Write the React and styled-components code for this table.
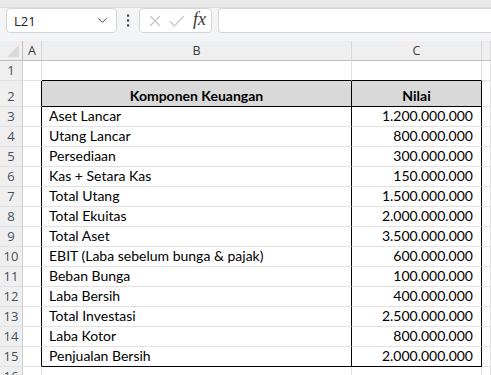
import React from "react"
import styled, { createGlobalStyle } from "styled-components"
import { ChevronDown } from "lucide-react"

const GlobalStyle = createGlobalStyle`
  html, body {
    margin: 0;
    padding: 0;
    background: #ffffff;
    overflow: hidden;
  }
  * {
    box-sizing: border-box;
  }
`

const Page = styled.div`
  width: 491px;
  height: 375px;
  overflow: hidden;
  background: #ffffff;
  font-family: "Open Sans", "Noto Sans", sans-serif;
`

const TopStrip = styled.div`
  height: 8px;
  background: #e9e9e9;
  border-bottom: 1px solid #dcdcdc;
`

const FormulaBar = styled.div`
  height: 33px;
  background: #f2f4f6;
  display: flex;
  align-items: flex-start;
  padding: 0 0 0 6px;
`

const Box = styled.div`
  height: 25px;
  background: #ffffff;
  border: 1px solid #d6d6d6;
  border-radius: 4px;
  display: flex;
  align-items: center;
`

const NameBox = styled(Box)`
  width: 111px;
  padding: 0 6px 0 7px;
  justify-content: space-between;
  font-size: 13px;
  color: #222;
`

const Dots = styled.div`
  width: 22px;
  height: 25px;
  display: flex;
  align-items: center;
  justify-content: center;
`

const FxBox = styled(Box)`
  width: 73px;
  padding: 0 5px 0 9px;
  justify-content: space-between;
`

const Fx = styled.span`
  font-family: "Liberation Serif", "DejaVu Serif", serif;
  font-style: italic;
  font-size: 18px;
  color: #3a3a3a;
  margin-top: -2px;
`

const FormulaInput = styled(Box)`
  flex: 1;
  margin-left: 6px;
  border-right: none;
  border-radius: 4px 0 0 4px;
`

const Sheet = styled.div`
  display: grid;
  grid-template-columns: 23px 19px 310px 130px 1fr;
  grid-template-rows: 20px 20px 26px repeat(13, 20px) 20px;
`

const Cell = styled.div`
  border-right: 1px solid ${p => p.$right || "#e1e1e1"};
  border-bottom: 1px solid ${p => p.$bottom || "#e1e1e1"};
  background: ${p => p.$bg || "#ffffff"};
  display: flex;
  align-items: flex-end;
  justify-content: ${p => (p.$align === "right" ? "flex-end" : p.$align === "center" ? "center" : "flex-start")};
  padding: ${p => (p.$align === "right" ? "0 8px 1px 0" : p.$align === "center" ? "0 0 1px 0" : "0 0 1px 7px")};
  font-family: "Lato", "Liberation Sans", sans-serif;
  font-size: 14px;
  font-weight: ${p => (p.$bold ? 700 : 400)};
  color: #000000;
  white-space: nowrap;
  overflow: hidden;
  line-height: 18px;
`

const ColHead = styled.div`
  background: #efefef;
  border-right: 1px solid #d9d9d9;
  border-bottom: 1px solid #bdbdbd;
  display: flex;
  align-items: center;
  justify-content: center;
  font-size: 12.5px;
  color: #3b3b3b;
`

const RowHead = styled.div`
  background: #efefef;
  border-right: 1px solid #d0d0d0;
  border-bottom: 1px solid #e1e1e1;
  display: flex;
  align-items: flex-end;
  justify-content: center;
  padding-bottom: 1px;
  font-size: 13px;
  color: #454f5b;
  line-height: 17px;
`

const Corner = styled(ColHead)`
  border-right: 1px solid #bdbdbd;
  align-items: flex-end;
  justify-content: flex-end;
  padding: 0 3px 3px 0;
`

const rows = [
  ["Aset Lancar", "1.200.000.000"],
  ["Utang Lancar", "800.000.000"],
  ["Persediaan", "300.000.000"],
  ["Kas + Setara Kas", "150.000.000"],
  ["Total Utang", "1.500.000.000"],
  ["Total Ekuitas", "2.000.000.000"],
  ["Total Aset", "3.500.000.000"],
  ["EBIT (Laba sebelum bunga & pajak)", "600.000.000"],
  ["Beban Bunga", "100.000.000"],
  ["Laba Bersih", "400.000.000"],
  ["Total Investasi", "2.500.000.000"],
  ["Laba Kotor", "800.000.000"],
  ["Penjualan Bersih", "2.000.000.000"],
]

const BLACK = "#000000"

export default function App() {
  return (
    <Page>
      <GlobalStyle />
      <TopStrip />
      <FormulaBar>
        <NameBox>
          <span>L21</span>
          <ChevronDown size={15} color="#444" strokeWidth={1.6} />
        </NameBox>
        <Dots>
          <svg width="4" height="13" viewBox="0 0 4 13">
            <rect x="1" y="0.5" width="2.2" height="2.2" fill="#444" />
            <rect x="1" y="5.4" width="2.2" height="2.2" fill="#444" />
            <rect x="1" y="10.3" width="2.2" height="2.2" fill="#444" />
          </svg>
        </Dots>
        <FxBox>
          <svg width="12" height="12" viewBox="0 0 12 12">
            <path d="M1 1 L11 11 M11 1 L1 11" stroke="#c4c4c4" strokeWidth="1.2" fill="none" />
          </svg>
          <svg width="16" height="12" viewBox="0 0 16 12">
            <path d="M1 6.5 L5.5 11 L15 1" stroke="#c4c4c4" strokeWidth="1.2" fill="none" />
          </svg>
          <Fx>fx</Fx>
        </FxBox>
        <FormulaInput />
      </FormulaBar>
      <Sheet>
        <Corner>
          <svg width="12" height="12" viewBox="0 0 12 12">
            <path d="M12 0 L12 12 L0 12 Z" fill="#d9d9d9" />
          </svg>
        </Corner>
        <ColHead>A</ColHead>
        <ColHead>B</ColHead>
        <ColHead>C</ColHead>
        <ColHead />

        <RowHead>1</RowHead>
        <Cell />
        <Cell $bottom={BLACK} />
        <Cell $bottom={BLACK} />
        <Cell />

        <RowHead>2</RowHead>
        <Cell $right={BLACK} />
        <Cell $right={BLACK} $bottom={BLACK} $bg="#d9d9d9" $align="center" $bold>
          Komponen Keuangan
        </Cell>
        <Cell $right={BLACK} $bottom={BLACK} $bg="#d9d9d9" $align="center" $bold>
          Nilai
        </Cell>
        <Cell />

        {rows.map(([label, value], i) => {
          const last = i === rows.length - 1
          return (
            <React.Fragment key={label}>
              <RowHead>{i + 3}</RowHead>
              <Cell $right={BLACK} />
              <Cell $right={BLACK} $bottom={last ? BLACK : undefined}>
                {label}
              </Cell>
              <Cell $right={BLACK} $bottom={last ? BLACK : undefined} $align="right">
                {value}
              </Cell>
              <Cell />
            </React.Fragment>
          )
        })}

        <RowHead>16</RowHead>
        <Cell />
        <Cell />
        <Cell />
        <Cell />
      </Sheet>
    </Page>
  )
}
